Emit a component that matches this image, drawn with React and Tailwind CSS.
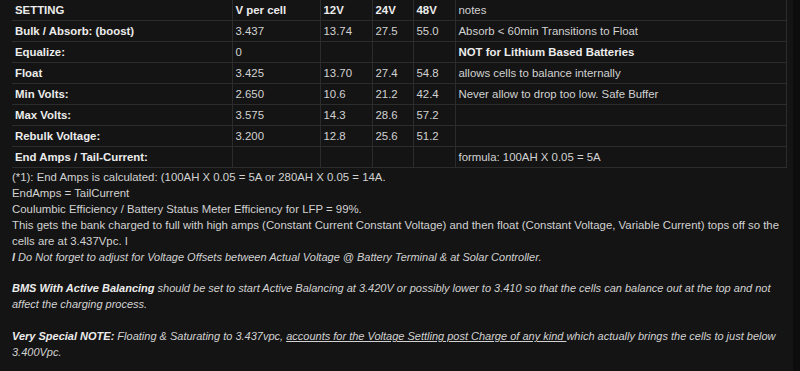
import React from "react";

const rows = [
  { name: "Bulk / Absorb: (boost)", cell: "3.437", v12: "13.74", v24: "27.5", v48: "55.0", note: "Absorb < 60min Transitions to Float" },
  { name: "Equalize:", cell: "0", v12: "", v24: "", v48: "", note: "NOT for Lithium Based Batteries", noteBold: true },
  { name: "Float", cell: "3.425", v12: "13.70", v24: "27.4", v48: "54.8", note: "allows cells to balance internally" },
  { name: "Min Volts:", cell: "2.650", v12: "10.6", v24: "21.2", v48: "42.4", note: "Never allow to drop too low. Safe Buffer" },
  { name: "Max Volts:", cell: "3.575", v12: "14.3", v24: "28.6", v48: "57.2", note: "" },
  { name: "Rebulk Voltage:", cell: "3.200", v12: "12.8", v24: "25.6", v48: "51.2", note: "" },
  { name: "End Amps / Tail-Current:", cell: "", v12: "", v24: "", v48: "", note: "formula: 100AH X 0.05 = 5A" },
];

function App() {
  const td = "border border-[#2c2c2c] px-[3px] h-[21px] align-middle";
  return (
    <div
      className="min-h-[371px] w-[800px] bg-[#141414] text-[#d2d2d2] text-[11.4px] leading-[16px] flex"
      style={{ fontFamily: "'Liberation Sans', Arial, sans-serif" }}
    >
      <div className="flex-1 pl-[12px] pr-[6px]">
        <table className="w-[775px] border-collapse table-fixed -mt-px">
          <colgroup>
            <col className="w-[220px]" />
            <col className="w-[88px]" />
            <col className="w-[52px]" />
            <col className="w-[41px]" />
            <col className="w-[42px]" />
            <col />
          </colgroup>
          <tbody>
            <tr className="font-bold text-[#ececec]">
              <td className={td + " border-l-0"}>SETTING</td>
              <td className={td}>V per cell</td>
              <td className={td}>12V</td>
              <td className={td}>24V</td>
              <td className={td}>48V</td>
              <td className={td + " font-normal text-[#d2d2d2]"}>notes</td>
            </tr>
            {rows.map((r) => (
              <tr key={r.name}>
                <td className={td + " border-l-0 font-bold text-[#ececec]"}>{r.name}</td>
                <td className={td}>{r.cell}</td>
                <td className={td}>{r.v12}</td>
                <td className={td}>{r.v24}</td>
                <td className={td}>{r.v48}</td>
                <td className={td + (r.noteBold ? " font-bold text-[#ececec]" : "")}>{r.note}</td>
              </tr>
            ))}
          </tbody>
        </table>

        <div className="pt-[1px]">
          <p>(*1): End Amps is calculated: (100AH X 0.05 = 5A or 280AH X 0.05 = 14A.</p>
          <p>EndAmps = TailCurrent</p>
          <p>Coulumbic Efficiency / Battery Status Meter Efficiency for LFP = 99%.</p>
          <p>
            This gets the bank charged to full with high amps (Constant Current Constant Voltage) and then float (Constant
            Voltage, Variable Current) tops off so the cells are at 3.437Vpc. I
          </p>
          <p className="italic text-[11px]">
            <b>I</b> Do Not forget to adjust for Voltage Offsets between Actual Voltage @ Battery Terminal &amp; at Solar
            Controller.
          </p>

          <p className="italic text-[11px] mt-[15px]">
            <b className="text-[#ececec]">BMS With Active Balancing</b> should be set to start Active Balancing at 3.420V
            or possibly lower to 3.410 so that the cells can balance out at the top and not affect the charging process.
          </p>

          <p className="italic text-[11px] mt-[16px]">
            <b className="text-[#ececec]">Very Special NOTE:</b> Floating &amp; Saturating to 3.437vpc,{" "}
            <span className="underline">accounts for the Voltage Settling post Charge of any kind </span>
            which actually brings the cells to just below 3.400Vpc.
          </p>
        </div>
      </div>
      <div className="w-[7px] bg-[#0d0d0d]" />
    </div>
  );
}

export default App;
